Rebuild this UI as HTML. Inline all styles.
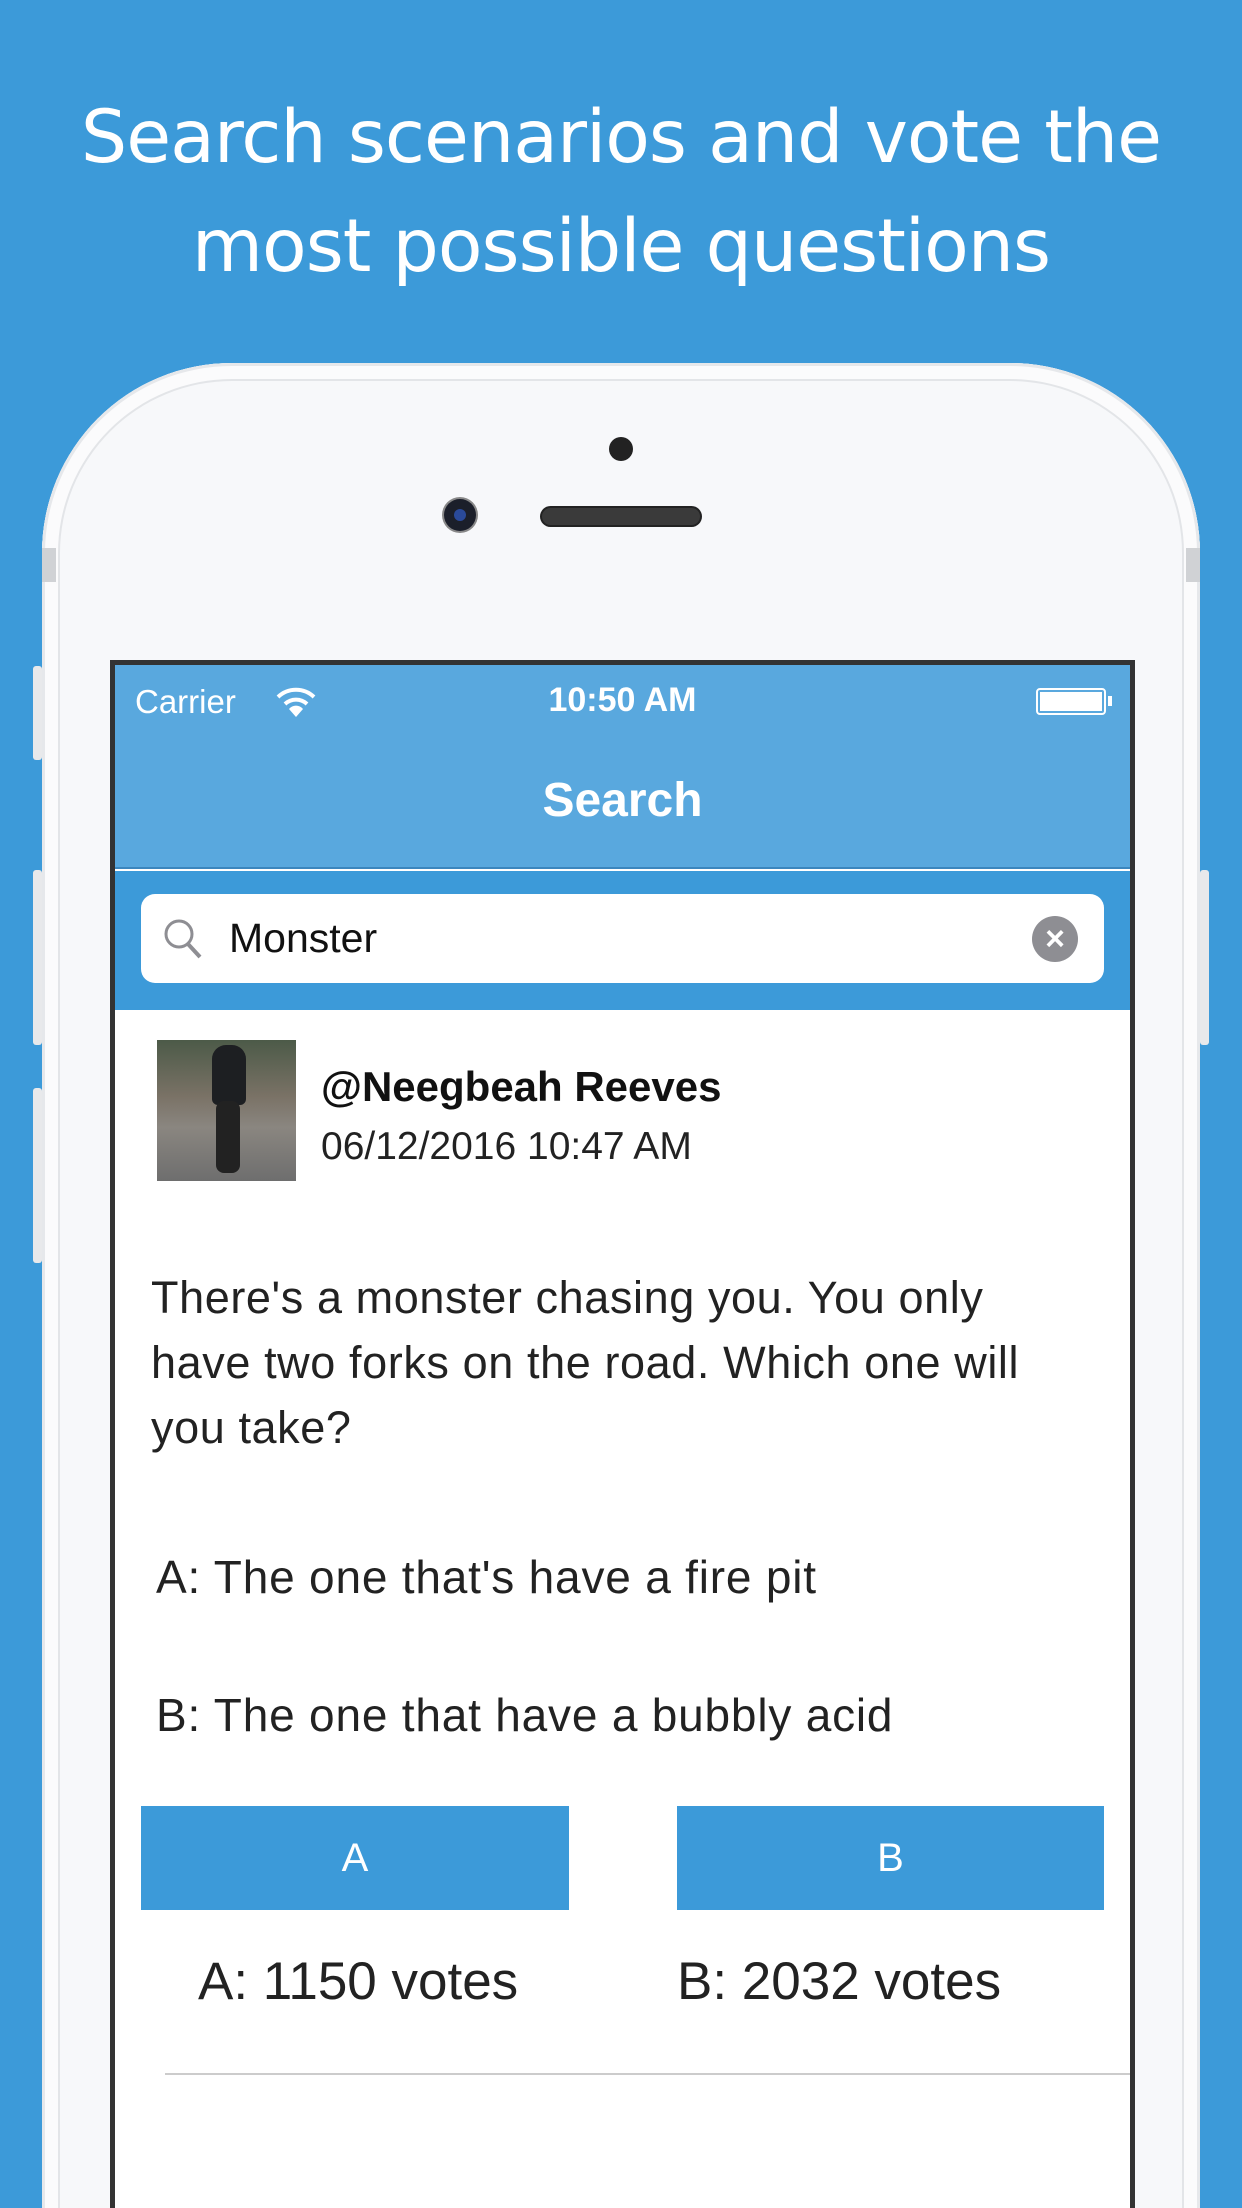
<!DOCTYPE html>
<html style="height:2208px;overflow:hidden"><head><style>
*{margin:0;padding:0;box-sizing:border-box}
html,body{width:1242px;height:2208px;overflow:hidden}
body{background:#3c9ad9;position:relative;font-family:"Liberation Sans",sans-serif}
#w{position:absolute;left:0;top:0;width:1242px;height:2208px;overflow:hidden}
.abs{position:absolute}
.title{left:0;width:1242px;text-align:center;color:#fff;font-size:73px;line-height:109px;top:83px;font-family:"DejaVu Sans","Liberation Sans",sans-serif;letter-spacing:-1px}
.phone{left:42px;top:363px;width:1158px;height:1950px;background:#f7f8fa;border-radius:190px 190px 0 0;box-shadow:0 0 0 3px #e6e8eb inset,0 0 0 16px #fbfbfc inset,0 0 0 18px #e3e5e8 inset}
.screen{left:110px;top:660px;width:1025px;height:1548px;overflow:hidden;background:#fff;border:5px solid #333;border-bottom:none}
.t{color:#111}
</style></head><body><div id="w">
<div class="abs title">Search scenarios and vote the<br>most possible questions</div>
<div class="abs" style="left:33px;top:666px;width:9px;height:94px;background:#e8e9eb;border-radius:3px"></div>
<div class="abs" style="left:33px;top:870px;width:9px;height:175px;background:#e8e9eb;border-radius:3px"></div>
<div class="abs" style="left:33px;top:1088px;width:9px;height:175px;background:#e8e9eb;border-radius:3px"></div>
<div class="abs" style="left:1200px;top:870px;width:9px;height:175px;background:#e8e9eb;border-radius:3px"></div>
<div class="abs phone"></div>
<div class="abs" style="left:42px;top:548px;width:14px;height:34px;background:#d0d2d5"></div>
<div class="abs" style="left:1186px;top:548px;width:14px;height:34px;background:#d0d2d5"></div>
<div class="abs" style="left:609px;top:437px;width:24px;height:24px;border-radius:50%;background:#222"></div>
<div class="abs" style="left:444px;top:499px;width:32px;height:32px;border-radius:50%;background:#1b1f2a;box-shadow:0 0 0 2px #888"></div>
<div class="abs" style="left:454px;top:509px;width:12px;height:12px;border-radius:50%;background:#2a4a9a"></div>
<div class="abs" style="left:542px;top:508px;width:158px;height:17px;border-radius:9px;background:#3a3a3a;box-shadow:0 0 0 2px #222"></div>
<div class="abs screen">
 <div class="abs" style="left:0;top:0;width:1015px;height:204px;background:#59a8de;border-bottom:2px solid #3b86be"></div>
 <div class="abs" style="left:20px;top:18px;color:#fff;font-size:33px">Carrier</div>
 <svg class="abs" style="left:160px;top:20px" width="42" height="34" viewBox="0 0 42 34"><path d="M3 12 A26 26 0 0 1 39 12" stroke="#fff" stroke-width="4" fill="none"/><path d="M10 19 A16 16 0 0 1 32 19" stroke="#fff" stroke-width="4" fill="none"/><path d="M21 32 L14 24 A9 9 0 0 1 28 24 Z" fill="#fff"/></svg>
 <div class="abs" style="left:0;width:1015px;text-align:center;top:16px;color:#fff;font-size:34px;font-weight:bold">10:50 AM</div>
 <div class="abs" style="left:921px;top:23px;width:70px;height:27px;border:2px solid #fff;border-radius:4px;padding:2px"><div style="background:#fff;width:100%;height:100%"></div></div>
 <div class="abs" style="left:993px;top:31px;width:4px;height:10px;background:#fff"></div>
 <div class="abs" style="left:0;width:1015px;text-align:center;top:108px;color:#fff;font-size:48px;font-weight:bold">Search</div>
 <div class="abs" style="left:0;top:206px;width:1015px;height:139px;background:#3c9ad9"></div>
 <div class="abs" style="left:26px;top:229px;width:963px;height:89px;background:#fff;border-radius:14px"></div>
 <svg class="abs" style="left:47px;top:252px" width="44" height="44" viewBox="0 0 44 44"><circle cx="17" cy="17" r="13" stroke="#8e8e93" stroke-width="3" fill="none"/><path d="M26 27 L38 40" stroke="#8e8e93" stroke-width="4"/></svg>
 <div class="abs t" style="left:114px;top:250px;font-size:41px">Monster</div>
 <div class="abs" style="left:917px;top:251px;width:46px;height:46px;border-radius:50%;background:#8e8e93;color:#fff;font-size:34px;line-height:46px;text-align:center;font-weight:bold">×</div>
 <div class="abs" style="left:42px;top:375px;width:139px;height:141px;background:linear-gradient(180deg,#4c5a48 0%,#7a7266 40%,#8a8680 62%,#6e6e6e 100%)"></div>
 <div class="abs" style="left:97px;top:380px;width:34px;height:60px;background:#1d1f22;border-radius:14px 14px 6px 6px"></div>
 <div class="abs" style="left:101px;top:436px;width:24px;height:72px;background:#222;border-radius:8px"></div>
 <div class="abs t" style="left:206px;top:398px;font-size:42px;font-weight:bold">@Neegbeah Reeves</div>
 <div class="abs" style="left:206px;top:460px;font-size:39px;color:#222">06/12/2016 10:47 AM</div>
 <div class="abs" style="left:36px;top:600px;font-size:45px;line-height:65px;color:#222;white-space:nowrap;letter-spacing:0.6px">There's a monster chasing you. You only<br>have two forks on the road. Which one will<br>you take?</div>
 <div class="abs" style="left:41px;top:885px;font-size:46px;color:#222;letter-spacing:0.8px">A: The one that's have a fire pit</div>
 <div class="abs" style="left:41px;top:1023px;font-size:46px;color:#222;letter-spacing:0.8px">B: The one that have a bubbly acid</div>
 <div class="abs" style="left:26px;top:1141px;width:428px;height:104px;background:#3c9ad9;color:#fff;font-size:40px;line-height:104px;text-align:center">A</div>
 <div class="abs" style="left:562px;top:1141px;width:427px;height:104px;background:#3c9ad9;color:#fff;font-size:40px;line-height:104px;text-align:center">B</div>
 <div class="abs" style="left:83px;top:1286px;font-size:53px;color:#222">A: 1150 votes</div>
 <div class="abs" style="left:562px;top:1286px;font-size:53px;color:#222">B: 2032 votes</div>
 <div class="abs" style="left:50px;top:1408px;width:965px;height:2px;background:#ccc"></div>
</div>
</div></body></html>
